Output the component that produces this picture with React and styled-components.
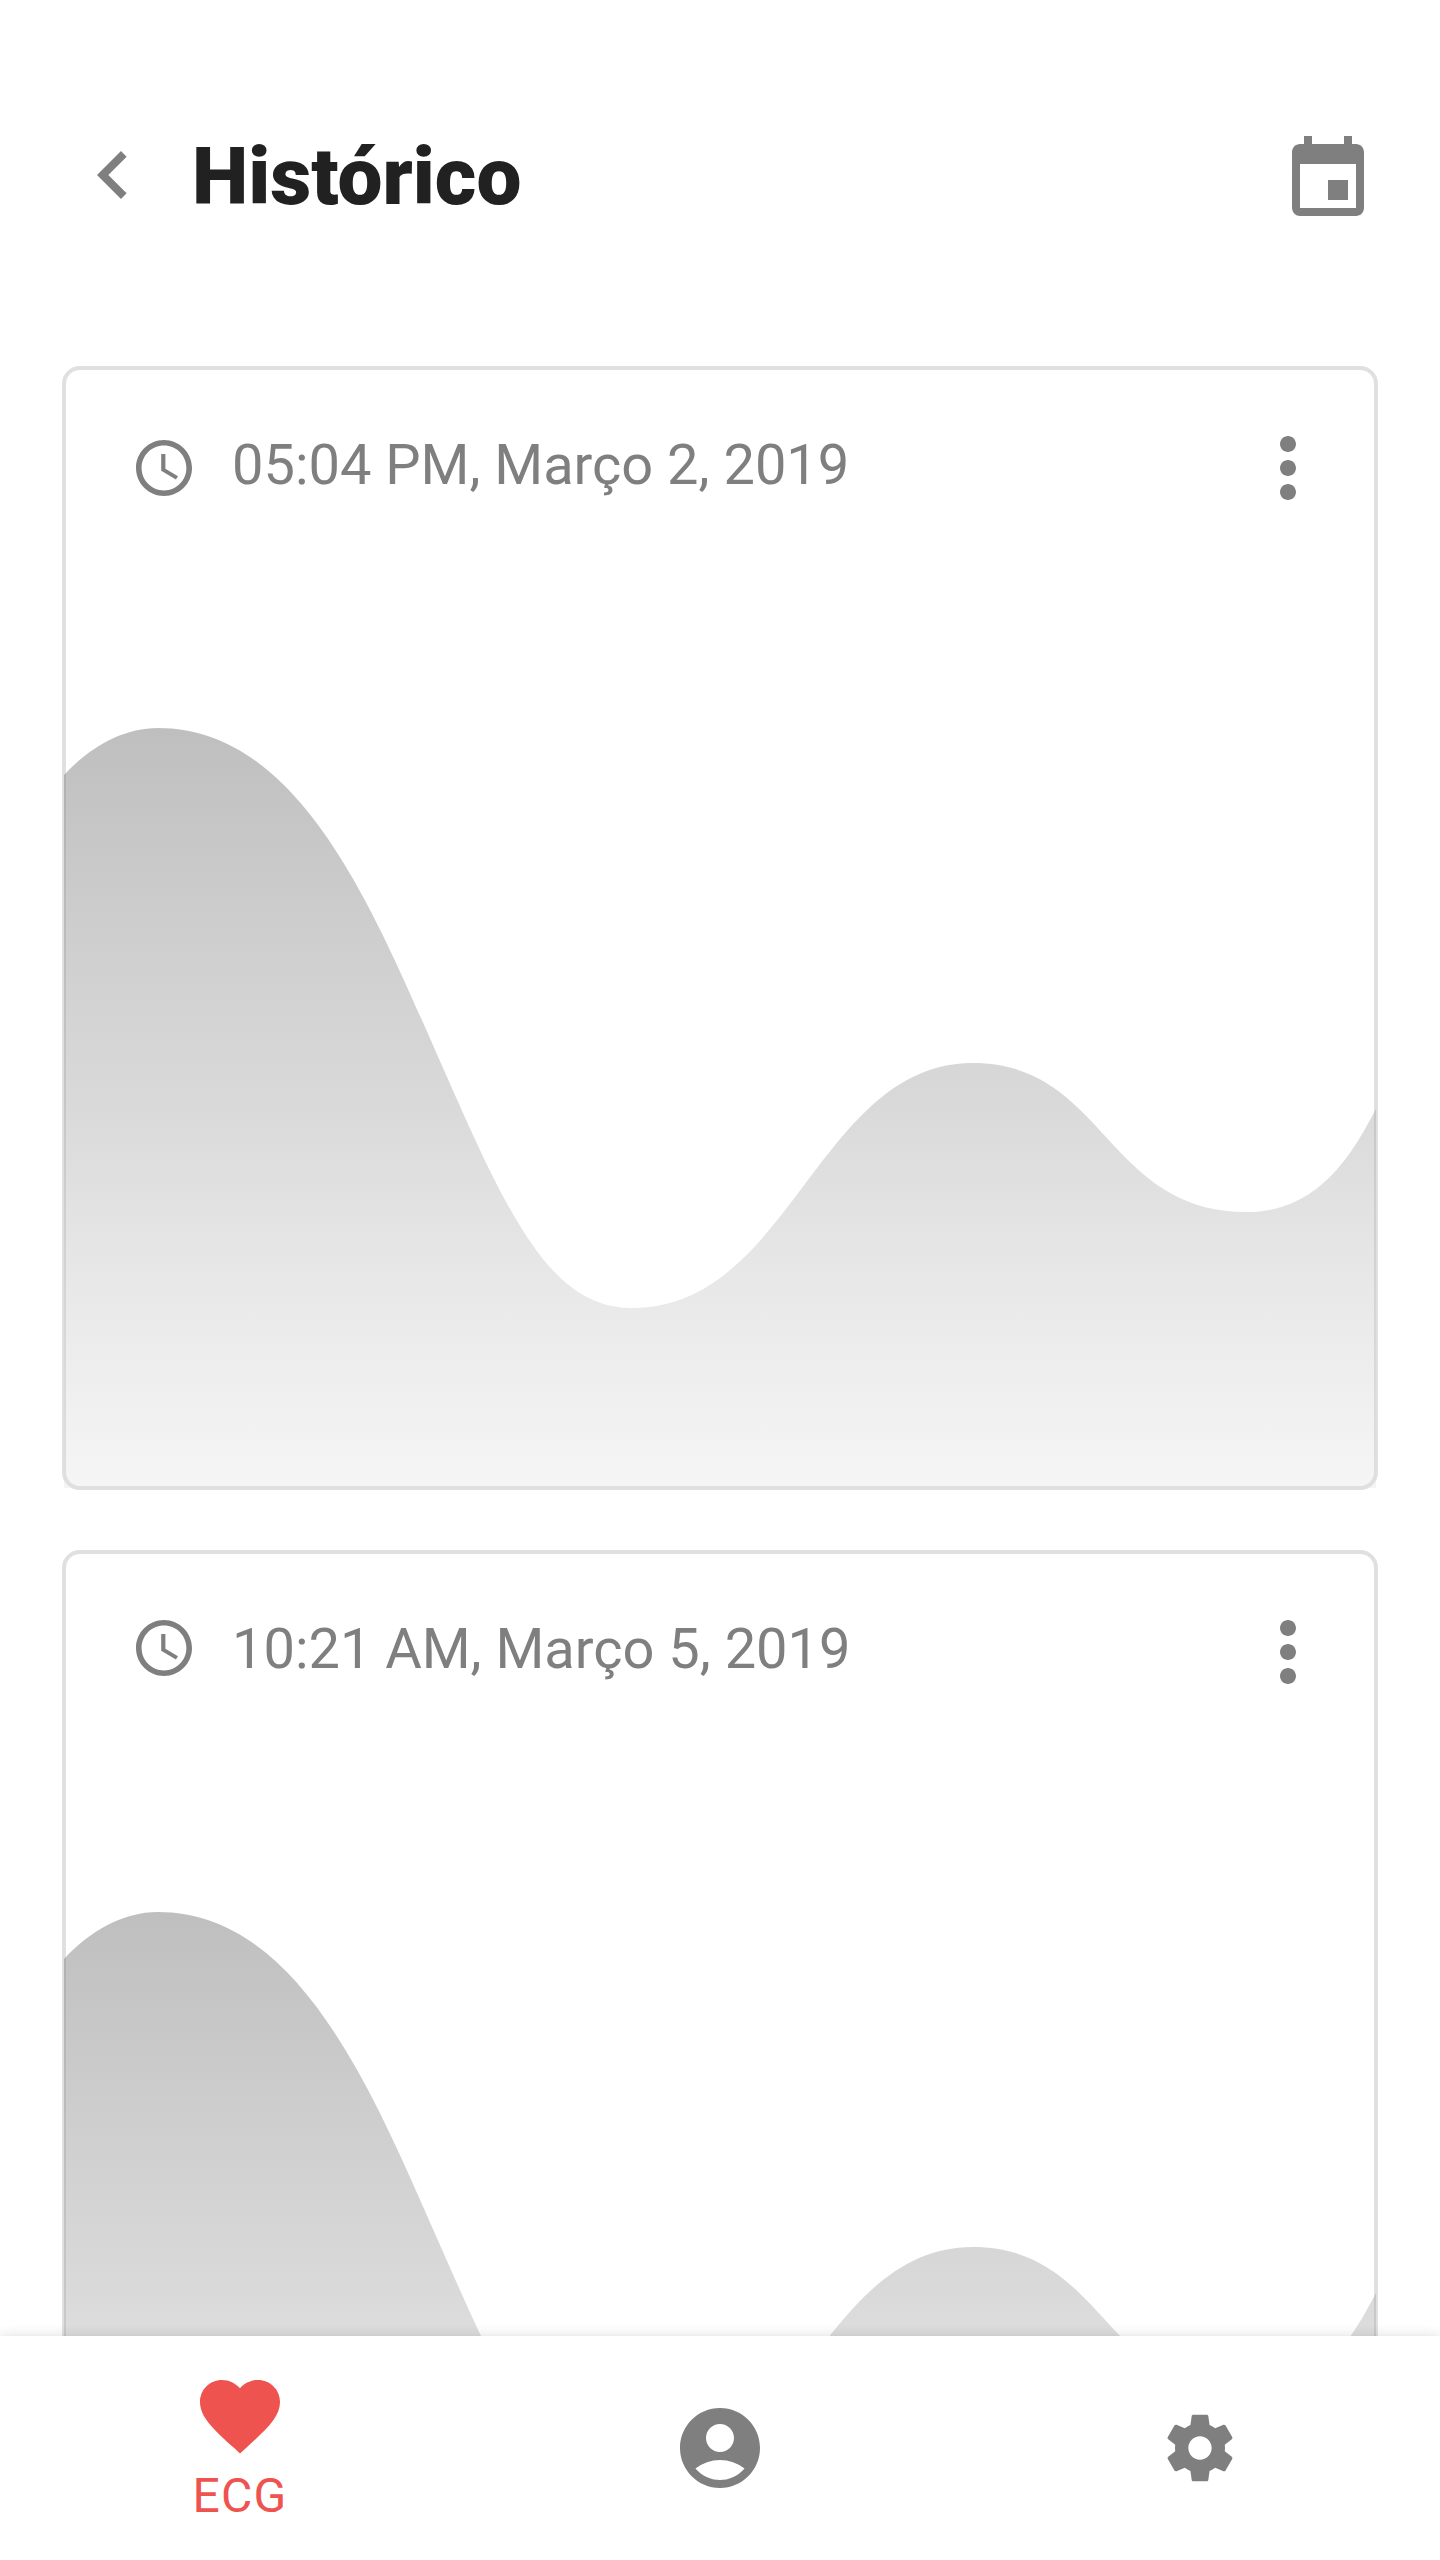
import React from "react";
import styled, { createGlobalStyle } from "styled-components";
import {
  MdAccountCircle,
  MdChevronLeft,
  MdEvent,
  MdFavorite,
  MdMoreVert,
} from "react-icons/md";

const GlobalStyle = createGlobalStyle`
  * { box-sizing: border-box; }
  body { margin: 0; background: #fff; }
  button {
    margin: 0;
    padding: 0;
    border: 0;
    background: none;
    font: inherit;
    color: inherit;
    cursor: pointer;
  }
  svg { display: block; flex: none; }
`;

const Screen = styled.div`
  display: flex;
  flex-direction: column;
  width: 1440px;
  height: 2560px;
  overflow: hidden;
  background: #fff;
  color: #7f7f7f;
  font-family: Roboto, "Liberation Sans", sans-serif;
`;

const Header = styled.header`
  display: flex;
  align-items: flex-start;
  height: 366px;
  padding: 127px 64px 0 65px;
`;

const Title = styled.h1`
  flex: 1;
  margin: 3px 0 0 31px;
  font-size: 80px;
  line-height: 94px;
  font-weight: 900;
  color: #212121;
`;

const IconButton = styled.button`
  display: flex;
  font-size: 96px;
  margin-top: ${(p) => p.$drop || 0}px;
`;

const List = styled.main`
  flex: 1;
  min-height: 0;
  display: flex;
  flex-direction: column;
  gap: 60px;
  padding: 0 62px;
  overflow: hidden;
`;

const Card = styled.article`
  flex: none;
  display: flex;
  flex-direction: column;
  justify-content: space-between;
  height: 1124px;
  border: 4px solid #e0e0e0;
  border-radius: 18px;
`;

const CardHeader = styled.div`
  display: flex;
  align-items: flex-start;
  padding: 50px 38px 0 70px;
`;

const ClockSlot = styled.span`
  display: flex;
  margin-top: ${(p) => p.$top}px;
`;

const DateText = styled.time`
  flex: 1;
  margin: 12px 0 0 40px;
  font-size: 56px;
  line-height: 66px;
  letter-spacing: -0.02px;
  white-space: nowrap;
`;

/* The area chart runs to the middle of the card's outline. */
const Chart = styled.svg`
  width: 1312px;
  height: 760px;
  margin: 0 -2px -2px;
`;

const TabBar = styled.nav`
  position: relative;
  z-index: 1;
  display: grid;
  grid-template-columns: repeat(3, 1fr);
  height: 224px;
  background: #fff;
  box-shadow: 0 0 12px rgba(0, 0, 0, 0.14);
`;

const Tab = styled.button`
  display: flex;
  flex-direction: column;
  align-items: center;
  justify-content: center;
  padding-bottom: ${(p) => (p.$active ? 4 : 0)}px;
  font-size: 96px;
  color: ${(p) => (p.$active ? "#ef5350" : "#7f7f7f")};
`;

const TabLabel = styled.span`
  margin-top: 4px;
  font-size: 48px;
  line-height: 56px;
  letter-spacing: 1.3px;
`;

function ClockIcon() {
  return (
    <svg width="56" height="56" viewBox="2 2 20 20" fill="currentColor">
      <path d="M11.99 2C6.47 2 2 6.48 2 12s4.47 10 9.99 10C17.52 22 22 17.52 22 12S17.52 2 11.99 2zM12 20c-4.42 0-8-3.58-8-8s3.58-8 8-8 8 3.58 8 8-3.58 8-8 8z" />
      <path d="M12.5 7H11v6l5.25 3.15.75-1.23-4.5-2.67z" />
    </svg>
  );
}

function GearIcon() {
  return (
    <svg width="80" height="80" viewBox="0 0 24 24" fill="currentColor">
      <path d="M19.43 12.98c.04-.32.07-.64.07-.98s-.03-.66-.07-.98l2.11-1.65c.19-.15.24-.42.12-.64l-2-3.46c-.12-.22-.39-.3-.61-.22l-2.49 1c-.52-.4-1.08-.73-1.69-.98l-.38-2.65C14.46 2.18 14.25 2 14 2h-4c-.25 0-.46.18-.49.42l-.38 2.65c-.61.25-1.17.59-1.69.98l-2.49-1c-.23-.09-.49 0-.61.22l-2 3.46c-.13.22-.07.49.12.64l2.11 1.65c-.04.32-.07.65-.07.98s.03.66.07.98l-2.11 1.65c-.19.15-.24.42-.12.64l2 3.46c.12.22.39.3.61.22l2.49-1c.52.4 1.08.73 1.69.98l.38 2.65c.03.24.24.42.49.42h4c.25 0 .46-.18.49-.42l.38-2.65c.61-.25 1.17-.59 1.69-.98l2.49 1c.23.09.49 0 .61-.22l2-3.46c.12-.22.07-.49-.12-.64l-2.11-1.65zM12 15.5c-1.93 0-3.5-1.57-3.5-3.5s1.57-3.5 3.5-3.5 3.5 1.57 3.5 3.5-1.57 3.5-3.5 3.5z" />
    </svg>
  );
}

function AreaChart({ id }) {
  return (
    <Chart viewBox="64 728 1312 760">
      <defs>
        <linearGradient id={id} x1="0" y1="0" x2="0" y2="1">
          <stop offset="0" stopColor="#707070" stopOpacity="0.45" />
          <stop offset="0.5" stopColor="#a1a1a1" stopOpacity="0.4" />
          <stop offset="1" stopColor="#dedede" stopOpacity="0.3" />
        </linearGradient>
      </defs>
      <path
        fill={`url(#${id})`}
        d="M64 775C90 747 123 728 158 728C285 728 357.5 873 421 1018C500 1196 542 1308 632 1308C791 1308 818 1063 973 1063C1105 1063 1106 1212 1247 1212C1322 1212 1355 1148 1376 1109V1488H64Z"
      />
    </Chart>
  );
}

const records = [
  { id: "r1", date: "05:04 PM, Março 2, 2019", clockTop: 20 },
  { id: "r2", date: "10:21 AM, Março 5, 2019", clockTop: 16 },
];

export default function App() {
  return (
    <Screen>
      <GlobalStyle />
      <Header>
        <IconButton aria-label="Voltar">
          <MdChevronLeft />
        </IconButton>
        <Title>Histórico</Title>
        <IconButton aria-label="Calendário" $drop={5}>
          <MdEvent />
        </IconButton>
      </Header>
      <List>
        {records.map((r) => (
          <Card key={r.id}>
            <CardHeader>
              <ClockSlot $top={r.clockTop}>
                <ClockIcon />
              </ClockSlot>
              <DateText>{r.date}</DateText>
              <IconButton aria-label="Mais opções">
                <MdMoreVert />
              </IconButton>
            </CardHeader>
            <AreaChart id={r.id} />
          </Card>
        ))}
      </List>
      <TabBar>
        <Tab $active>
          <MdFavorite />
          <TabLabel>ECG</TabLabel>
        </Tab>
        <Tab aria-label="Perfil">
          <MdAccountCircle />
        </Tab>
        <Tab aria-label="Configurações">
          <GearIcon />
        </Tab>
      </TabBar>
    </Screen>
  );
}
